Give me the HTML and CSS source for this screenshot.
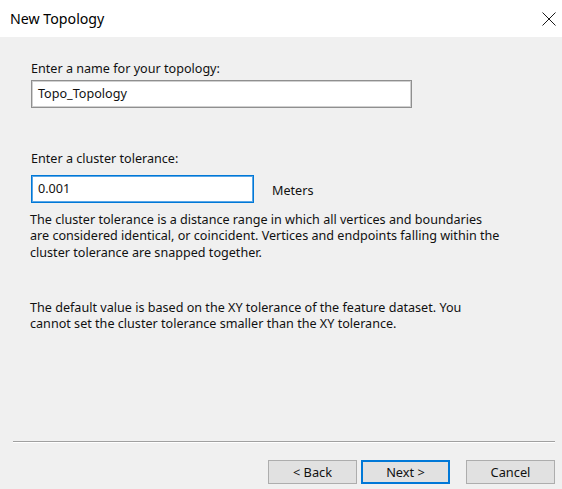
FILE: index.html
```html
<!DOCTYPE html>
<html>
<head>
<meta charset="utf-8">
<link rel="stylesheet" href="styles.css">
</head>
<body>
<div class="dialog">
  <header class="titlebar">
    <span class="title">New Topology</span>
    <svg class="close" width="14" height="14" viewBox="0 0 14 14"><path d="M0.5 0.5 L13.5 13.5 M13.5 0.5 L0.5 13.5" stroke="#1a1a1a" stroke-width="1" fill="none"/></svg>
  </header>
  <main class="content">
    <label class="label first">Enter a name for your topology:</label>
    <div class="input name">Topo_Topology</div>
    <label class="label second">Enter a cluster tolerance:</label>
    <div class="row">
      <div class="input tol focused">0.001</div>
      <span class="units">Meters</span>
    </div>
    <p class="para p1">The cluster tolerance is a distance range in which all vertices and boundaries<br>are considered identical, or coincident. Vertices and endpoints falling within the<br>cluster tolerance are snapped together.</p>
    <p class="para p2">The default value is based on the XY tolerance of the feature dataset. You<br>cannot set the cluster tolerance smaller than the XY tolerance.</p>
  </main>
  <footer class="footer">
    <div class="sep"></div>
    <div class="buttons">
      <div class="btn">&lt; Back</div>
      <div class="btn default">Next &gt;</div>
      <div class="btn cancel">Cancel</div>
    </div>
  </footer>
</div>
</body>
</html>
```

FILE: styles.css
```css
html, body {
  margin: 0;
  padding: 0;
}
body {
  background: #f0f0f0;
  font-family: "Noto Sans", "Open Sans", sans-serif;
  font-size: 12.6px;
  color: #111;
}
.dialog {
  display: flex;
  flex-direction: column;
  height: 489px;
  width: 562px;
  overflow: hidden;
}
.titlebar {
  height: 37px;
  background: #fff;
  display: flex;
  align-items: center;
  justify-content: space-between;
  padding: 0 6px 0 10px;
  box-sizing: border-box;
}
.title {
  font-size: 14.2px;
  color: #000;
}
.close {
  display: block;
}
.content {
  flex: 1;
  padding: 0 0 0 31px;
  display: flex;
  flex-direction: column;
  align-items: flex-start;
}
.label {
  display: block;
  line-height: 16px;
  height: 16px;
}
.label.first { margin-top: 24px; }
.label.second { margin-top: 43px; }
.input {
  box-sizing: border-box;
  height: 28px;
  background: #fff;
  border: 1px solid #8f8f8f;
  box-shadow: inset 0 0 0 1px #d0d0d0;
  padding: 0 6px;
  line-height: 26px;
}
.input.name {
  width: 381px;
  margin-top: 3px;
}
.row {
  display: flex;
  align-items: center;
  margin-top: 8px;
}
.input.tol {
  width: 223px;
}
.input.focused {
  border: 1px solid #0078d7;
  box-shadow: inset 0 0 0 1px #5aa6e6;
}
.units {
  margin-left: 18px;
  margin-top: 2px;
}
.para {
  margin: 0;
  line-height: 16.3px;
}
.p1 { margin-top: 9px; margin-left: -1px; }
.p2 { margin-top: 39px; margin-left: -1px; }
.footer {
  padding: 0 7px 5px 13px;
}
.sep {
  height: 1px;
  background: #a0a0a0;
  border-bottom: 1px solid #fff;
}
.buttons {
  display: flex;
  justify-content: flex-end;
  margin-top: 17px;
}
.btn {
  box-sizing: border-box;
  width: 89px;
  height: 24px;
  background: #e1e1e1;
  border: 1px solid #adadad;
  text-align: center;
  line-height: 22px;
  font-size: 12.8px;
  margin-left: 4px;
}
.btn.default {
  border: 2px solid #0078d7;
  line-height: 20px;
}
.btn.cancel {
  margin-left: 16px;
}
```
